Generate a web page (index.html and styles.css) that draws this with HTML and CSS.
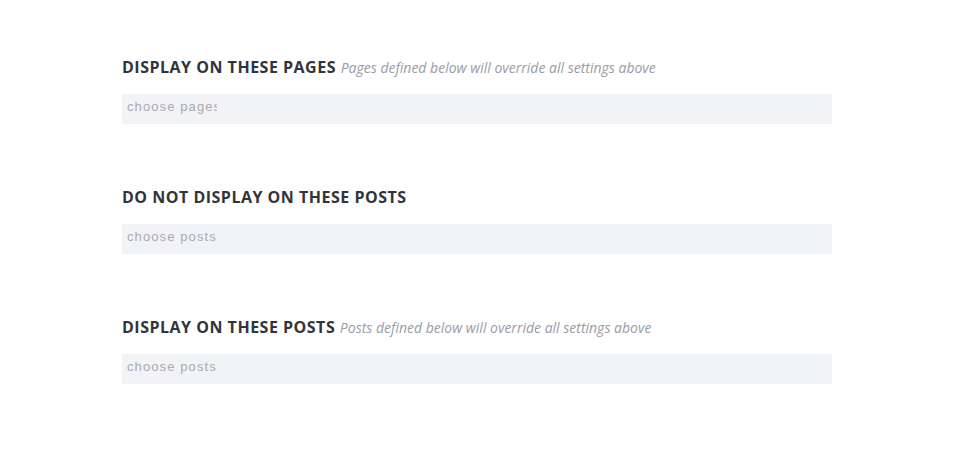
FILE: index.html
```html
<!DOCTYPE html>
<html>
<head>
<meta charset="utf-8">
<link rel="stylesheet" href="styles.css">
</head>
<body>
<div class="page">
  <div class="field">
    <h3 class="label">DISPLAY ON THESE PAGES <span class="hint">Pages defined below will override all settings above</span></h3>
    <div class="input"><input class="search" type="text" placeholder="choose pages"></div>
  </div>
  <div class="field">
    <h3 class="label">DO NOT DISPLAY ON THESE POSTS</h3>
    <div class="input"><input class="search" type="text" placeholder="choose posts"></div>
  </div>
  <div class="field">
    <h3 class="label">DISPLAY ON THESE POSTS <span class="hint">Posts defined below will override all settings above</span></h3>
    <div class="input"><input class="search" type="text" placeholder="choose posts"></div>
  </div>
</div>
</body>
</html>
```
FILE: styles.css
```css
html, body {
  margin: 0;
  padding: 0;
  background: #ffffff;
}
.page {
  padding: 57px 0 0 122px;
  width: 710px;
  display: flex;
  flex-direction: column;
  gap: 63px;
}
.field {
  display: flex;
  flex-direction: column;
  gap: 17px;
}
.label {
  margin: 0;
  height: 20px;
  font-family: "Open Sans", sans-serif;
  font-weight: 700;
  font-size: 16px;
  line-height: 20px;
  letter-spacing: 0.5px;
  color: #32343b;
}
.hint {
  font-weight: 400;
  font-style: italic;
  font-size: 14px;
  line-height: 1;
  letter-spacing: 0;
  color: #9a9ca6;
}
.input {
  height: 30px;
  background: #f2f3f6;
  display: flex;
  align-items: flex-start;
}
.search {
  box-sizing: border-box;
  border: 0;
  outline: 0;
  background: transparent;
  margin: 0;
  padding: 0 0 0 5px;
  width: 95px;
  height: 25px;
  font-family: "Liberation Sans", Arial, sans-serif;
  font-size: 13px;
  letter-spacing: 1.1px;
  color: #444;
}
.search::placeholder {
  color: #a9aaae;
}
```
